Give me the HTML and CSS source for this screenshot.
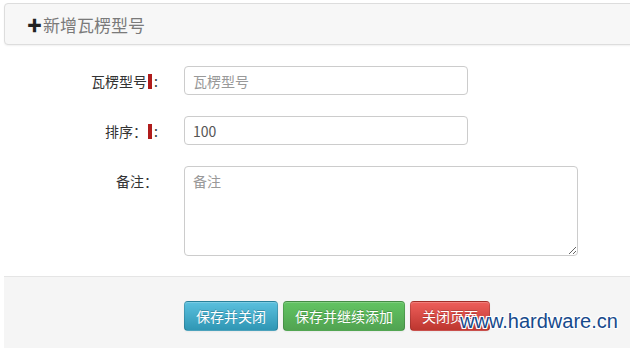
FILE: index.html
```html
<!DOCTYPE html>
<html lang="zh-CN">
<head>
    <meta charset="UTF-8">
    <title>新增瓦楞型号</title>
    <link rel="stylesheet" href="styles.css">
</head>
<body>
    <div class="page">
        <!-- Heading -->
        <div class="panel-heading">
            <span class="plus">✚</span><span class="title">新增瓦楞型号</span>
        </div>

        <!-- Form -->
        <form class="form">
            <div class="row">
                <label class="label" for="name">瓦楞型号<i class="req"></i>:</label>
                <input class="input" type="text" id="name" placeholder="瓦楞型号">
            </div>
            <div class="row">
                <label class="label" for="sort">排序：<i class="req"></i>:</label>
                <input class="input" type="text" id="sort" value="100">
            </div>
            <div class="row row-top">
                <label class="label" for="memo">备注：</label>
                <textarea class="textarea" id="memo" placeholder="备注"></textarea>
            </div>
        </form>

        <!-- Actions -->
        <div class="footer">
            <button class="btn btn-info" type="button">保存并关闭</button>
            <button class="btn btn-success" type="button">保存并继续添加</button>
            <button class="btn btn-danger" type="button">关闭页面</button>
        </div>
    </div>
    <div class="watermark">www.hardware.cn</div>
</body>
</html>
```

FILE: styles.css
```css
html, body {
    margin: 0;
    padding: 0;
    background: #fff;
    overflow: hidden;
}
body {
    font-family: "Noto Sans CJK SC", "Liberation Sans", sans-serif;
    font-size: 14px;
    color: #333;
}
.page {
    padding: 3px 0 0 4px;
}
.panel-heading {
    height: 40px;
    margin-right: -10px;
    padding-left: 22px;
    display: flex;
    align-items: center;
    background-color: #f7f7f7;
    border: 1px solid #ddd;
    border-radius: 4px;
    box-shadow: 0 1px 2px rgba(0, 0, 0, 0.06);
}
.plus {
    font-size: 15px;
    font-weight: bold;
    color: #222;
    margin-right: 1px;
}
.title {
    font-size: 17px;
    color: #7a7a7a;
}
.form {
    padding-top: 21px;
}
.row {
    display: flex;
    align-items: center;
    margin-bottom: 21px;
}
.row-top {
    align-items: flex-start;
    margin-bottom: 20px;
}
.row-top .label {
    padding-top: 5px;
}
.label {
    width: 154px;
    padding-right: 26px;
    text-align: right;
    line-height: 20px;
}
.req {
    display: inline-block;
    width: 4px;
    height: 15px;
    margin: 0 2px 0 1px;
    vertical-align: -2px;
    background-color: #b01c1c;
}
.input, .textarea {
    box-sizing: border-box;
    font-family: inherit;
    font-size: 14px;
    color: #555;
    border: 1px solid #ccc;
    border-radius: 4px;
    padding: 4px 8px;
    background: #fff;
}
.input {
    width: 284px;
    height: 29px;
}
.textarea {
    width: 394px;
    height: 90px;
    resize: vertical;
}
.input::placeholder, .textarea::placeholder {
    color: #999;
}
.footer {
    box-sizing: border-box;
    margin-right: -10px;
    height: 72px;
    padding: 24px 0 0 180px;
    display: flex;
    align-items: flex-start;
    gap: 5px;
    background-color: #f5f5f5;
    border-top: 1px solid #e5e5e5;
}
.btn {
    height: 30px;
    padding: 0 11px;
    font-family: inherit;
    font-size: 14px;
    color: #fff;
    border-radius: 4px;
    border: 1px solid rgba(0, 0, 0, 0.15);
    box-shadow: inset 0 1px 0 rgba(255, 255, 255, 0.2), 0 1px 2px rgba(0, 0, 0, 0.05);
    text-shadow: 0 -1px 0 rgba(0, 0, 0, 0.2);
    cursor: pointer;
}
.btn-info {
    background-image: linear-gradient(#5bc0de, #2f96b4);
}
.btn-success {
    background-image: linear-gradient(#62c462, #51a351);
}
.btn-danger {
    background-image: linear-gradient(#ee5f5b, #bd362f);
}
.watermark {
    position: absolute;
    left: 460px;
    top: 310px;
    font-family: "Liberation Sans", sans-serif;
    font-size: 20px;
    color: #174a8c;
    text-shadow: -1px -1px 0 #fff, 1px -1px 0 #fff, -1px 1px 0 #fff, 1px 1px 0 #fff, 0 0 2px #fff;
}
```
